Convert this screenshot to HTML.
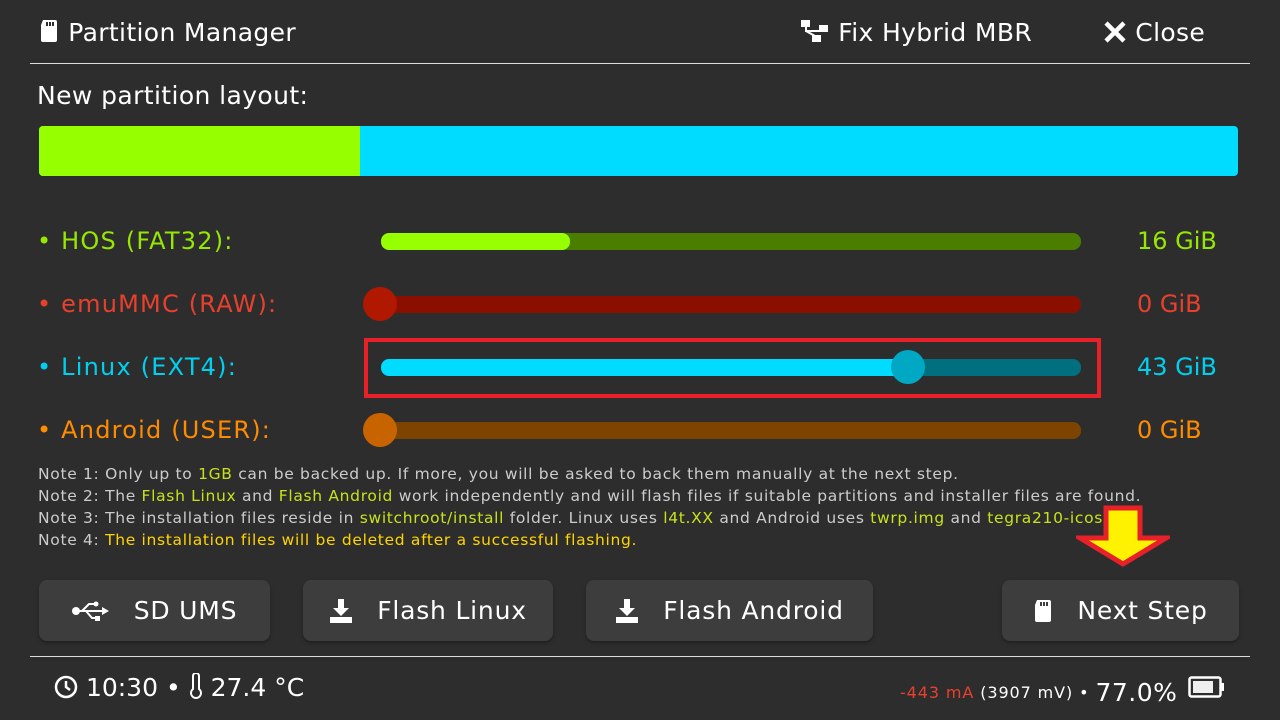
<!DOCTYPE html><html><head><meta charset="utf-8"><style>
*{margin:0;padding:0;box-sizing:border-box}
body{width:1280px;height:720px;background:#2d2d2d;font-family:"DejaVu Sans","Liberation Sans",sans-serif;color:#fff;position:relative;overflow:hidden}
.a{position:absolute;white-space:nowrap}
.t{font-size:25px;top:18px;letter-spacing:0.35px}
.hl{position:absolute;left:30px;width:1220px;height:1px;background:#ddd}
.lab{font-size:24px;left:37px;letter-spacing:1.2px}
.val{font-size:24px;left:1137px}
.tr{position:absolute;left:381px;width:700px;height:17px;border-radius:8px}
.knob{position:absolute;width:34px;height:34px;border-radius:50%}
.note{font-size:15.5px;color:#ccc;left:38px;letter-spacing:0.68px}
.g{color:#c8e21a}.y{color:#ffd400}
.btn{position:absolute;top:580px;height:61px;background:#3d3d3d;border-radius:8px;font-size:25px;letter-spacing:0.8px;display:flex;align-items:center;justify-content:center;gap:24px;box-shadow:0 2px 3px rgba(0,0,0,.3)}
</style></head><body>
<div class="a t" style="left:38px"><svg width="22" height="24" viewBox="0 0 20 24" style="vertical-align:-2px"><path d="M4 1h12a2 2 0 0 1 2 2v18a2 2 0 0 1-2 2H4a2 2 0 0 1-2-2V6z" fill="#fff"/><rect x="7" y="3" width="2" height="4" fill="#2d2d2d"/><rect x="10" y="3" width="2" height="4" fill="#2d2d2d"/><rect x="13" y="3" width="2" height="4" fill="#2d2d2d"/></svg> Partition Manager</div>
<div class="a t" style="left:800px"><svg width="30" height="24" viewBox="0 0 30 24" style="vertical-align:-2px"><rect x="1" y="1" width="9" height="7" fill="#fff"/><rect x="19" y="6" width="9" height="7" fill="#fff"/><rect x="12" y="16" width="9" height="7" fill="#fff"/><path d="M6 8v4h13M6 12l9 5" stroke="#fff" stroke-width="2" fill="none"/></svg> Fix Hybrid MBR</div>
<div class="a t" style="left:1103px"><svg width="24" height="24" viewBox="0 0 24 24" style="vertical-align:-3px"><path d="M3 3l18 18M21 3L3 21" stroke="#fff" stroke-width="4.5"/></svg> Close</div>
<div class="hl" style="top:63px"></div>
<div class="a" style="left:37px;top:81px;font-size:25px;letter-spacing:0.4px">New partition layout:</div>
<div class="a" style="left:39px;top:126px;width:1199px;height:50px;background:#00dcff;border-radius:4px;overflow:hidden"><div style="width:321px;height:50px;background:#96ff00"></div></div>

<div class="a lab" style="top:227px;color:#96e800">• HOS (FAT32):</div>
<div class="tr" style="top:233px;background:#4a7d00"><div style="width:189px;height:17px;border-radius:8px;background:#96ff00"></div></div>
<div class="a val" style="top:227px;color:#96e800">16 GiB</div>

<div class="a lab" style="top:290px;color:#e8402c">• emuMMC (RAW):</div>
<div class="tr" style="top:296px;background:#8a0f00"></div>
<div class="knob" style="left:363px;top:287px;background:#b01800"></div>
<div class="a val" style="top:290px;color:#e8402c">0 GiB</div>

<div class="a lab" style="top:353px;color:#00d0f0">• Linux (EXT4):</div>
<div class="a" style="left:364px;top:338px;width:737px;height:60px;border:4px solid #e8202a"></div>
<div class="tr" style="top:359px;background:#006f80"><div style="width:527px;height:17px;border-radius:8px;background:#00dcff"></div></div>
<div class="knob" style="left:891px;top:350px;background:#00a8c4"></div>
<div class="a val" style="top:353px;color:#00d0f0">43 GiB</div>

<div class="a lab" style="top:416px;color:#ff8c00">• Android (USER):</div>
<div class="tr" style="top:422px;background:#7d4400"></div>
<div class="knob" style="left:363px;top:413px;background:#c86400"></div>
<div class="a val" style="top:416px;color:#ff8c00">0 GiB</div>

<div class="a note" style="top:465px">Note 1: Only up to <span class="g">1GB</span> can be backed up. If more, you will be asked to back them manually at the next step.</div>
<div class="a note" style="top:487px">Note 2: The <span class="g">Flash Linux</span> and <span class="g">Flash Android</span> work independently and will flash files if suitable partitions and installer files are found.</div>
<div class="a note" style="top:509px">Note 3: The installation files reside in <span class="g">switchroot/install</span> folder. Linux uses <span class="g">l4t.XX</span> and Android uses <span class="g">twrp.img</span> and <span class="g">tegra210-icosa</span></div>
<div class="a note" style="top:531px">Note 4: <span class="y">The installation files will be deleted after a successful flashing.</span></div>
<svg class="a" style="left:1076px;top:505px" width="94" height="62" viewBox="0 0 94 62"><path d="M30 3h34v30h26L47 59 4 33h26z" fill="#fff200" stroke="#e8202a" stroke-width="5"/></svg>

<div class="btn" style="left:39px;width:231px"><svg width="38" height="24" viewBox="0 0 38 24"><circle cx="4" cy="12" r="4" fill="#fff"/><path d="M4 12h28M10 12l7-7h5M14 12l6 7h3" stroke="#fff" stroke-width="2" fill="none"/><path d="M30 8l7 4-7 4z" fill="#fff"/><circle cx="24" cy="5" r="2.5" fill="#fff"/><rect x="23" y="17" width="5" height="5" fill="#fff"/></svg>SD UMS</div>
<div class="btn" style="left:303px;width:250px"><svg width="24" height="26" viewBox="0 0 24 26"><path d="M9 1h6v9h5l-8 8-8-8h5z" fill="#fff"/><rect x="1" y="19" width="22" height="6" fill="#fff"/></svg>Flash Linux</div>
<div class="btn" style="left:586px;width:287px"><svg width="24" height="26" viewBox="0 0 24 26"><path d="M9 1h6v9h5l-8 8-8-8h5z" fill="#fff"/><rect x="1" y="19" width="22" height="6" fill="#fff"/></svg>Flash Android</div>
<div class="btn" style="left:1002px;width:237px"><svg width="20" height="26" viewBox="0 0 20 24"><path d="M4 1h12a2 2 0 0 1 2 2v18a2 2 0 0 1-2 2H4a2 2 0 0 1-2-2V6z" fill="#fff"/><rect x="7" y="3" width="2" height="4" fill="#3d3d3d"/><rect x="10" y="3" width="2" height="4" fill="#3d3d3d"/><rect x="13" y="3" width="2" height="4" fill="#3d3d3d"/></svg>Next Step</div>

<div class="hl" style="top:656px"></div>
<div class="a" style="left:54px;top:673px;font-size:25px"><svg width="24" height="24" viewBox="0 0 24 24" style="vertical-align:-3px"><circle cx="12" cy="12" r="10" stroke="#fff" stroke-width="2.5" fill="none"/><path d="M12 6v6l4 3" stroke="#fff" stroke-width="2.5" fill="none"/></svg> 10:30 • <svg width="14" height="26" viewBox="0 0 14 26" style="vertical-align:-3px"><path d="M4 3a3 3 0 0 1 6 0v13a5 5 0 1 1-6 0z" stroke="#fff" stroke-width="2" fill="none"/></svg> 27.4 °C</div>
<div class="a" style="left:900px;top:678px;font-size:16px;letter-spacing:0.9px"><span style="color:#e8402c">-443 mA</span> (3907 mV) • <span style="font-size:25px;vertical-align:-3px;letter-spacing:0.5px">77.0%</span></div>
<svg class="a" style="left:1188px;top:676px" width="38" height="22" viewBox="0 0 38 22"><rect x="1.5" y="1.5" width="31" height="19" rx="2" stroke="#fff" stroke-width="2.5" fill="none"/><rect x="5" y="5" width="20" height="12" fill="#eee"/><rect x="33" y="7" width="3" height="8" fill="#fff"/></svg>
</body></html>
